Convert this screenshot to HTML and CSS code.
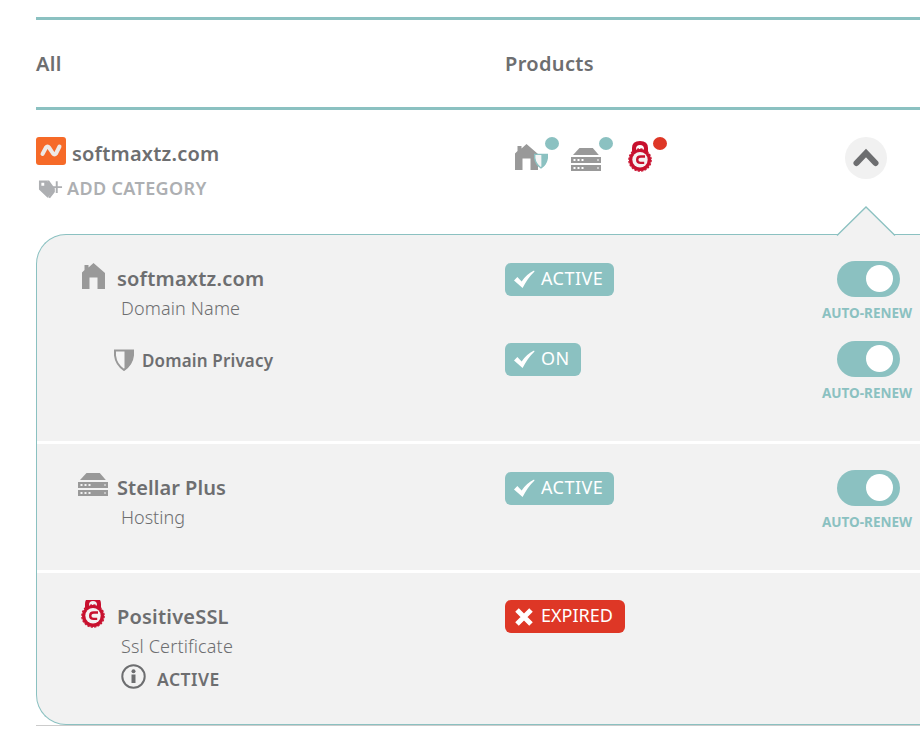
FILE: index.html
```
<!DOCTYPE html>
<html lang="en">
<head>
<meta charset="utf-8">
<title>Domain list</title>
<link rel="stylesheet" href="styles.css">
</head>
<body>
<svg class="defs" aria-hidden="true">
  <symbol id="house" viewBox="0 0 23 26"><path d="M0 26V9.500L2.500 7V2h4v2.500L11.500 0L23 10v16h-7.500V14.500h-8V26z"/></symbol>
  <symbol id="server" viewBox="0 0 30 24"><path d="M8.500 0h13.300l6 7H2z"/><path fill-rule="evenodd" d="M0 9h30v6H0zM2.500 11v2h2v-2zM6.500 11v2h2v-2zM10.500 11v2h2v-2zM26.500 11v2h1v-2zM0 17h30v6H0zM2.500 19v2h2v-2zM6.500 19v2h2v-2zM10.500 19v2h2v-2zM26.500 19v2h1v-2z"/></symbol>
  <symbol id="lock" viewBox="0 0 24 31" preserveAspectRatio="xMidYMax slice"><path fill-rule="evenodd" d="M4 11V7q0-7 8-7t8 7v4zM8 9.500q4-2.500 8 0V8q0-4-4-4t-4 4z"/><circle cx="12" cy="19" r="11"/><circle cx="12" cy="19" r="11.200" fill="none" stroke="currentColor" stroke-width="1.200" stroke-dasharray="2.200 1.320"/><circle cx="12" cy="18.700" r="7.700" fill="#f5f1f2"/><path d="M17 15.500h-4.200q-3.600 0-3.600 3.200t3.400 3.200h3.600" fill="none" stroke="currentColor" stroke-width="2.400"/></symbol>
  <symbol id="check" viewBox="0 0 22 19"><path d="M0 10.500L3.500 7L8 11.500Q13.500 3.500 21 0L21.500 1Q14 8 9 18.500z"/></symbol>
  <symbol id="shield" viewBox="0 0 20 22"><path d="M1 1.500h18v5q-1 9-9 14.500Q2 15.500 1 6.500z" fill="#f5f5f5" stroke="currentColor" stroke-width="2"/><path d="M10.500 1h8.500v6q-1 9-8.500 14z"/></symbol>
</svg>

<main class="list">
  <header class="head">
    <div>All</div>
    <div>Products</div>
  </header>

  <section class="summary">
    <div class="identity">
      <div class="domain">
        <svg class="logo" viewBox="0 0 30 28"><rect width="30" height="28" rx="3" fill="#f66a28"/><path d="M6.500 17L10 10.500q1.500-2.200 3 0L17 16.500q1.500 2 3 0L23.500 9.500" fill="none" stroke="#eeeae6" stroke-width="4" stroke-linecap="round" stroke-linejoin="round"/></svg>
        <span class="title">softmaxtz.com</span>
      </div>
      <div class="category">
        <svg class="tag" viewBox="0 0 26 20"><path fill-rule="evenodd" d="M1 0h8l8 9.500-7 8.500L1 9.500zM3.500 2.500v3h3v-3z"/><path d="M9 0h2.500l6 8.500V12l-5 6.500-2-1L15.500 10z"/><path d="M18.500 1h2v5h4.500v2h-4.500v5h-2V8H14V6h4.500z"/></svg>
        <span>ADD CATEGORY</span>
      </div>
    </div>
    <div class="products">
      <div class="product"><svg class="p-house"><use href="#house"/></svg><svg class="p-shield"><use href="#shield"/></svg><i class="dot"></i></div>
      <div class="product"><svg class="p-server"><use href="#server"/></svg><i class="dot"></i></div>
      <div class="product"><svg class="p-lock"><use href="#lock"/></svg><i class="dot expired"></i></div>
    </div>
    <div class="collapse"><svg viewBox="0 0 42 42"><path d="M11.500 26L21 16L30.500 26" fill="none" stroke="#6d6e70" stroke-width="6" stroke-linecap="round"/></svg></div>
  </section>

  <div class="details">
    <section class="panel">
      <svg class="pointer" viewBox="0 0 60 30"><path d="M1.500 30V29L30 1L58.500 29v1z" fill="#f2f2f2"/><path d="M1 29.500L30 1L59 29.500" fill="none" stroke="#8bc1c1" stroke-width="1.300"/></svg>
      <div class="group first">
        <div class="row">
          <div class="item">
            <svg class="i-house"><use href="#house"/></svg>
            <div><div class="title">softmaxtz.com</div><div class="sub">Domain Name</div></div>
          </div>
          <div><span class="badge"><svg class="check"><use href="#check"/></svg>ACTIVE</span></div>
          <div class="renew"><span class="toggle"></span><span class="renew-text">AUTO-RENEW</span></div>
        </div>
        <div class="row">
          <div class="item nested"><svg class="i-shield"><use href="#shield"/></svg><span class="small-title">Domain Privacy</span></div>
          <div><span class="badge"><svg class="check"><use href="#check"/></svg>ON</span></div>
          <div class="renew"><span class="toggle"></span><span class="renew-text">AUTO-RENEW</span></div>
        </div>
      </div>
      <div class="group second">
        <div class="row">
          <div class="item">
            <svg class="i-server"><use href="#server"/></svg>
            <div><div class="title tight">Stellar Plus</div><div class="sub tight">Hosting</div></div>
          </div>
          <div><span class="badge"><svg class="check"><use href="#check"/></svg>ACTIVE</span></div>
          <div class="renew"><span class="toggle"></span><span class="renew-text">AUTO-RENEW</span></div>
        </div>
      </div>
      <div class="group third">
        <div class="row">
          <div class="item">
            <svg class="i-lock"><use href="#lock"/></svg>
            <div>
              <div class="title">PositiveSSL</div><div class="sub">Ssl Certificate</div>
              <div class="status"><svg class="info" viewBox="0 0 25 25"><circle cx="12.500" cy="12.500" r="11.200" fill="none" stroke="currentColor" stroke-width="2"/><circle cx="12.500" cy="7.300" r="2"/><path d="M10.500 10.500h4V19h-4z"/></svg><span>ACTIVE</span></div>
            </div>
          </div>
          <div><span class="badge expired"><svg class="cross" viewBox="0 0 20 20"><path d="M3 3L17 17M17 3L3 17" stroke="#fff" stroke-width="5"/></svg>EXPIRED</span></div>
        </div>
      </div>
    </section>
  </div>
</main>
</body>
</html>
```
FILE: styles.css
```
* { box-sizing: border-box; }
body {
  margin: 0;
  height: 732px;
  overflow: hidden;
  background: #fff;
  color: #6d6e70;
  font-family: "Noto Sans", sans-serif;
}
svg { display: block; flex: none; fill: currentColor; overflow: visible; }
.defs { position: absolute; width: 0; height: 0; }
.list { margin-left: 36px; padding-top: 17px; }

.head {
  display: grid;
  grid-template-columns: 469px 1fr;
  height: 93px;
  padding-top: 32px;
  border-top: 3px solid #8bc1c1;
  border-bottom: 3px solid #8bc1c1;
  font-size: 20px;
  font-weight: 600;
  line-height: 24px;
  letter-spacing: 0.35px;
}

.summary {
  display: grid;
  grid-template-columns: 478px 331px 42px;
  height: 124px;
  padding-top: 27px;
}
.domain { display: flex; gap: 6px; height: 30px; }
.logo { width: 30px; height: 28px; }
.title {
  font-size: 20px;
  font-weight: 600;
  line-height: 24px;
  letter-spacing: 0.2px;
}
.domain .title { margin-top: 5px; }
.category {
  display: flex;
  gap: 4px;
  margin: 9px 0 0 2px;
  color: #adafb2;
  font-size: 18px;
  font-weight: 600;
  line-height: 24px;
  letter-spacing: 0.35px;
}
.tag { width: 25px; height: 20px; margin-top: 4px; }

.products { display: flex; height: 40px; }
.product { position: relative; width: 54px; color: #999; }
.dot {
  position: absolute;
  top: 0;
  left: 31px;
  width: 14px;
  height: 13px;
  border-radius: 50%;
  background: #8bc1c1;
}
.dot.expired { background: #de3726; }
.p-house { width: 23px; height: 26px; margin: 7px 0 0 1px; }
.p-shield { position: absolute; left: 20px; top: 16px; width: 14px; height: 16px; color: #8bc1c1; }
.p-server { width: 30px; height: 24px; margin: 11px 0 0 3px; }
.p-lock { width: 24px; height: 31px; margin: 4px 0 0 6px; color: #c8102e; }
.collapse { width: 42px; height: 42px; border-radius: 50%; background: #f1f1f1; }

.details { height: 492px; border-bottom: 1px solid #ccc; }
.panel {
  position: relative;
  height: 491px;
  border: 1px solid #8bc1c1;
  border-right: 0;
  border-radius: 30px 0 0 30px;
  background: #f2f2f2;
}
.pointer { position: absolute; left: 799px; top: -29px; width: 60px; height: 30px; }
.group.first { height: 209px; padding-top: 26px; border-bottom: 3px solid #fff; }
.group.second { height: 129px; padding-top: 26px; border-bottom: 3px solid #fff; }
.group.third { padding-top: 26px; }
.row { display: grid; grid-template-columns: 468px 312px 100px; height: 80px; }
.item { display: flex; padding: 6px 0 0 41px; }
.item > svg { color: #999; }
.title.tight { letter-spacing: 0.05px; }
.sub {
  margin: 5px 0 0 4px;
  font-size: 18px;
  font-weight: 300;
  line-height: 24px;
  letter-spacing: 0.15px;
}
.sub.tight { letter-spacing: 0; }
.i-house { width: 23px; height: 26px; margin: -4px 12px 0 4px; }
.i-server { width: 30px; height: 24px; margin: -3px 9px 0 0; }
.item > .i-lock { width: 24px; height: 28px; margin: -5px 12px 0 3px; color: #c8102e; overflow: hidden; }
.i-shield { width: 20px; height: 22px; margin-top: 2px; }
.nested { gap: 8px; padding-left: 77px; }
.small-title { font-size: 17px; font-weight: 600; line-height: 28px; letter-spacing: 0.15px; }
.status {
  display: flex;
  gap: 11px;
  margin: 6px 0 0 4px;
  font-size: 17.500px;
  font-weight: 600;
  line-height: 30px;
  letter-spacing: 0.5px;
}
.info { width: 25px; height: 25px; }

.badge {
  display: inline-flex;
  align-items: center;
  height: 33px;
  margin-top: 2px;
  padding: 0 11px 3px 9px;
  border-radius: 6px;
  background: #8bc1c1;
  color: #fff;
  font-size: 18px;
  line-height: 24px;
  letter-spacing: 0.45px;
  vertical-align: top;
}
.badge.expired { margin-top: 1px; padding-right: 12px; background: #de3726; letter-spacing: 0; }
.check { width: 21px; height: 19px; margin: 3px 6px 0 0; }
.cross { width: 20px; height: 20px; margin: 3px 7px 0 0; }

.renew { display: flex; flex-direction: column; align-items: center; }
.toggle {
  width: 63px;
  height: 36px;
  margin-left: 3px;
  padding: 4px 7px 0 29px;
  border-radius: 18px;
  background: #8bc1c1;
}
.toggle::before {
  content: "";
  display: block;
  width: 27px;
  height: 27px;
  border-radius: 50%;
  background: #fff;
}
.renew-text {
  margin-top: 8px;
  color: #8bc1c1;
  font-size: 13.500px;
  font-weight: 700;
  line-height: 16px;
  letter-spacing: 0;
}
```
